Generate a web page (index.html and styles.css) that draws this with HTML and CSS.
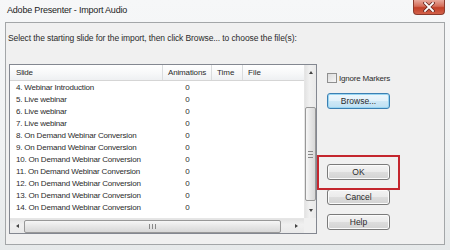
FILE: index.html
```html
<!DOCTYPE html>
<html lang="en">

<head>
    <meta charset="UTF-8">
    <title>Adobe Presenter - Import Audio</title>
    <link rel="stylesheet" href="styles.css">
</head>

<body>
    <div class="window">
        <div class="titlebar">
            <span class="title">Adobe Presenter - Import Audio</span>
            <div class="close">
                <svg width="12" height="10" viewBox="0 0 12 10">
                    <path d="M2 1 L10 9 M10 1 L2 9" stroke="#6b2a22" stroke-width="3.4" stroke-linecap="square" />
                    <path d="M2 1 L10 9 M10 1 L2 9" stroke="#ffffff" stroke-width="1.8" stroke-linecap="square" />
                </svg>
            </div>
        </div>

        <div class="dialog">
            <p class="prompt">Select the starting slide for the import, then click Browse... to choose the file(s):</p>

            <div class="main">
                <div class="list">
                    <div class="content">
                        <div class="row head">
                            <div class="c-slide">Slide</div>
                            <div class="c-anim">Animations</div>
                            <div class="c-time">Time</div>
                            <div class="c-file">File</div>
                        </div>
                        <div class="row"><div class="c-slide">4. Webinar Introduction</div><div class="c-anim">0</div><div class="c-time"></div><div class="c-file"></div></div>
                        <div class="row"><div class="c-slide">5. Live webinar</div><div class="c-anim">0</div><div class="c-time"></div><div class="c-file"></div></div>
                        <div class="row"><div class="c-slide">6. Live webinar</div><div class="c-anim">0</div><div class="c-time"></div><div class="c-file"></div></div>
                        <div class="row"><div class="c-slide">7. Live webinar</div><div class="c-anim">0</div><div class="c-time"></div><div class="c-file"></div></div>
                        <div class="row"><div class="c-slide">8. On Demand Webinar Conversion</div><div class="c-anim">0</div><div class="c-time"></div><div class="c-file"></div></div>
                        <div class="row"><div class="c-slide">9. On Demand Webinar Conversion</div><div class="c-anim">0</div><div class="c-time"></div><div class="c-file"></div></div>
                        <div class="row"><div class="c-slide">10. On Demand Webinar Conversion</div><div class="c-anim">0</div><div class="c-time"></div><div class="c-file"></div></div>
                        <div class="row"><div class="c-slide">11. On Demand Webinar Conversion</div><div class="c-anim">0</div><div class="c-time"></div><div class="c-file"></div></div>
                        <div class="row"><div class="c-slide">12. On Demand Webinar Conversion</div><div class="c-anim">0</div><div class="c-time"></div><div class="c-file"></div></div>
                        <div class="row"><div class="c-slide">13. On Demand Webinar Conversion</div><div class="c-anim">0</div><div class="c-time"></div><div class="c-file"></div></div>
                        <div class="row"><div class="c-slide">14. On Demand Webinar Conversion</div><div class="c-anim">0</div><div class="c-time"></div><div class="c-file"></div></div>
                    </div>

                    <div class="vscroll">
                        <div class="arrow up"></div>
                        <div class="vtrack">
                            <div class="vthumb"><span class="grip-h"></span></div>
                        </div>
                        <div class="arrow down"></div>
                    </div>

                    <div class="hscroll">
                        <div class="arrow left"></div>
                        <div class="hthumb"><span class="grip-v"></span></div>
                        <div class="arrow right"></div>
                    </div>

                    <div class="corner"></div>
                </div>

                <div class="side">
                    <label class="check"><span class="box"></span>Ignore Markers</label>
                    <div class="btn browse">Browse...</div>
                    <div class="ok-wrap">
                        <div class="btn">OK</div>
                    </div>
                    <div class="btn cancel">Cancel</div>
                    <div class="btn help">Help</div>
                </div>
            </div>
        </div>
    </div>
</body>

</html>
```

FILE: styles.css
```css
/* Reset */
body,
div,
p {
    margin: 0;
    padding: 0;
    box-sizing: border-box;
}

body {
    font-family: 'Liberation Sans', Arial, sans-serif;
    font-size: 8.5px;
    color: #2b2b2b;
    background-color: #ffffff;
}

/* Window frame */
.window {
    width: 450px;
    height: 250px;
    background: linear-gradient(180deg, #f6f7f8 0%, #f0f2f3 60%, #e6e9ea 100%);
    display: flex;
    flex-direction: column;
    overflow: hidden;
}

.titlebar {
    height: 22px;
    display: flex;
    align-items: flex-start;
    padding-left: 7px;
}

.title {
    font-size: 9px;
    color: #1c1c1c;
    margin-top: 5px;
    letter-spacing: -0.2px;
}

.close {
    margin-left: auto;
    margin-right: 5px;
    width: 32px;
    height: 15px;
    border: 1px solid #8b3a2c;
    border-top: none;
    border-radius: 0 0 4px 4px;
    background: linear-gradient(180deg, #e8a99c 0%, #d46c58 45%, #c23f27 55%, #d2614a 100%);
    display: flex;
    align-items: center;
    justify-content: center;
}

/* Dialog body */
.dialog {
    margin: 0 5px;
    height: 223px;
    border: 1px solid #a3a6a8;
    background-color: #f0f0f0;
    padding: 9px 0 0 2px;
}

.prompt {
    line-height: 12px;
    letter-spacing: -0.1px;
}

.main {
    display: flex;
    margin-top: 20px;
    font-size: 8px;
}

/* List view */
.list {
    width: 308px;
    height: 170px;
    margin-left: 1px;
    border: 1px solid #838790;
    background-color: #ffffff;
    display: grid;
    grid-template-columns: 1fr 12px;
    grid-template-rows: 1fr 15px;
}

.content {
    overflow: hidden;
}

.row {
    display: flex;
    height: 12px;
    line-height: 12px;
}

.row.head {
    height: 16px;
    line-height: 15px;
    margin-bottom: 1px;
    background: linear-gradient(180deg, #ffffff 0%, #f7f8f9 55%, #eef0f2 100%);
    border-bottom: 1px solid #d5d5d5;
}

.row.head div {
    border-right: 1px solid #dadcde;
}

.c-slide {
    width: 153px;
    padding-left: 6px;
    white-space: nowrap;
    letter-spacing: -0.2px;
}

.c-anim {
    width: 49px;
    text-align: center;
}

.c-time {
    width: 31px;
    padding-left: 5px;
}

.c-file {
    width: 61px;
    padding-left: 5px;
}

.row.head .c-anim {
    letter-spacing: -0.15px;
}

.row.head .c-file {
    border-right: none;
}

/* Scrollbars */
.vscroll {
    display: flex;
    flex-direction: column;
    background: linear-gradient(90deg, #e3e3e3, #f0f0f0 40%, #e9e9e9);
    border-left: 1px solid #e6e6e6;
}

.vtrack {
    flex: 1;
    padding-top: 33px;
}

.vthumb {
    height: 94px;
    border: 1px solid #989898;
    border-radius: 2px;
    background: linear-gradient(90deg, #f6f6f6, #e6e6e6 50%, #d8d8d8);
    display: flex;
    align-items: center;
    justify-content: center;
}

.grip-h {
    width: 5px;
    height: 5px;
    border-top: 1px solid #888;
    border-bottom: 1px solid #888;
    background: linear-gradient(180deg, transparent 40%, #888 40%, #888 60%, transparent 60%);
}

.hscroll {
    display: flex;
    align-items: center;
    background: linear-gradient(180deg, #e3e3e3, #f0f0f0 40%, #e9e9e9);
    border-top: 1px solid #e6e6e6;
}

.hthumb {
    width: 257px;
    height: 13px;
    margin-left: 5px;
    border: 1px solid #989898;
    border-radius: 2px;
    background: linear-gradient(180deg, #f6f6f6, #e6e6e6 50%, #d8d8d8);
    display: flex;
    align-items: center;
    justify-content: center;
}

.grip-v {
    width: 5px;
    height: 5px;
    border-left: 1px solid #888;
    border-right: 1px solid #888;
    background: linear-gradient(90deg, transparent 40%, #888 40%, #888 60%, transparent 60%);
}

.corner {
    background-color: #f0f0f0;
}

.arrow {
    width: 0;
    height: 0;
    border-style: solid;
    border-color: transparent;
}

.arrow.up {
    margin: 6px auto 0;
    border-width: 0 2.5px 3px;
    border-bottom-color: #444;
}

.arrow.down {
    margin: 0 auto 6px;
    border-width: 3px 2.5px 0;
    border-top-color: #444;
}

.arrow.left {
    margin-left: 6px;
    border-width: 2.5px 3px 2.5px 0;
    border-right-color: #444;
}

.arrow.right {
    margin-left: 14px;
    border-width: 2.5px 0 2.5px 3px;
    border-left-color: #444;
}

/* Right hand buttons */
.side {
    display: flex;
    flex-direction: column;
    margin-left: 10px;
    padding-top: 9px;
}

.check {
    display: flex;
    align-items: center;
    height: 10px;
    letter-spacing: -0.2px;
}

.box {
    width: 10px;
    height: 10px;
    margin-right: 2px;
    border: 1px solid #8f8f8f;
    background: linear-gradient(135deg, #dcdcdc, #f6f6f6);
    box-sizing: border-box;
}

.btn {
    width: 63px;
    height: 16px;
    line-height: 14px;
    font-size: 8.5px;
    text-align: center;
    border: 1px solid #7a7a7a;
    border-radius: 3px;
    background: linear-gradient(180deg, #f3f3f3 0%, #ebebeb 48%, #dddddd 52%, #d2d2d2 100%);
    box-shadow: inset 0 0 0 1px #fbfbfb;
}

.btn.browse {
    margin-top: 10px;
    border-color: #3c80b3;
    box-shadow: inset 0 0 0 1px #9ad6f2;
    background: linear-gradient(180deg, #eef7fc 0%, #e2f1fa 48%, #cfe8f6 52%, #bde0f3 100%);
}

.ok-wrap {
    position: relative;
    margin-top: 55px;
}

/* red highlight drawn over the dialog */
.ok-wrap::after {
    content: "";
    position: absolute;
    top: -9px;
    left: -10px;
    right: -10px;
    bottom: -10px;
    border: 2px solid #c4262e;
}

.btn.cancel {
    margin-top: 9px;
}

.btn.help {
    margin-top: 9px;
}
```
